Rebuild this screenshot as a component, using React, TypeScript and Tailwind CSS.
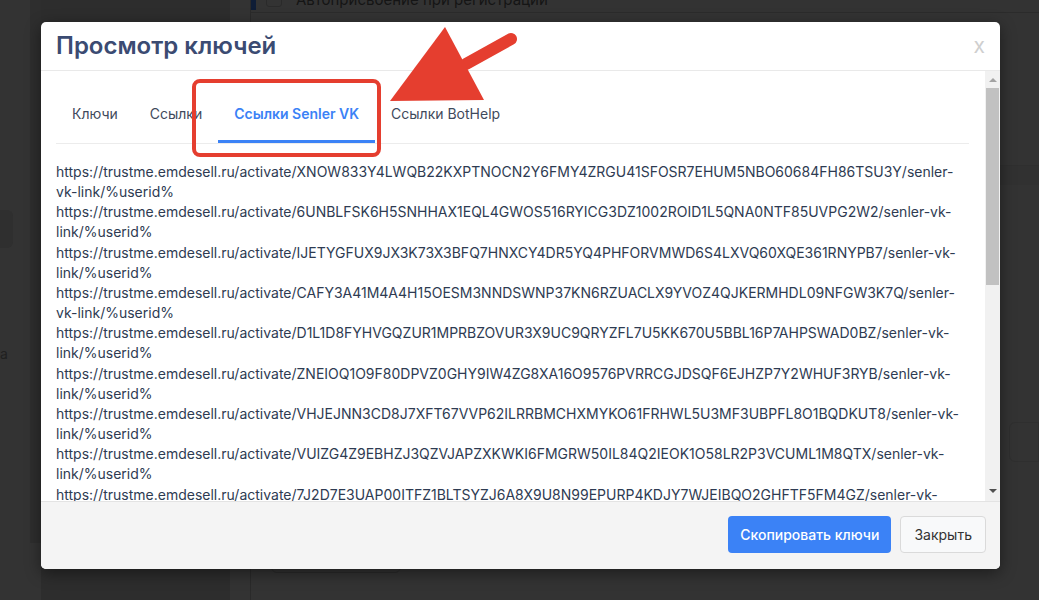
import React from "react";

type Link = { id: string; head: string; tail: string };

const BASE = "https://trustme.emdesell.ru/activate/";

// rows are split the same way the browser wrapped them in the modal
const links: Link[] = [
  { id: "XNOW833Y4LWQB22KXPTNOCN2Y6FMY4ZRGU41SFOSR7EHUM5NBO60684FH86TSU3Y", head: "senler-", tail: "vk-link/%userid%" },
  { id: "6UNBLFSK6H5SNHHAX1EQL4GWOS516RYICG3DZ1002ROID1L5QNA0NTF85UVPG2W2", head: "senler-vk-", tail: "link/%userid%" },
  { id: "IJETYGFUX9JX3K73X3BFQ7HNXCY4DR5YQ4PHFORVMWD6S4LXVQ60XQE361RNYPB7", head: "senler-vk-", tail: "link/%userid%" },
  { id: "CAFY3A41M4A4H15OESM3NNDSWNP37KN6RZUACLX9YVOZ4QJKERMHDL09NFGW3K7Q", head: "senler-", tail: "vk-link/%userid%" },
  { id: "D1L1D8FYHVGQZUR1MPRBZOVUR3X9UC9QRYZFL7U5KK670U5BBL16P7AHPSWAD0BZ", head: "senler-vk-", tail: "link/%userid%" },
  { id: "ZNEIOQ1O9F80DPVZ0GHY9IW4ZG8XA16O9576PVRRCGJDSQF6EJHZP7Y2WHUF3RYB", head: "senler-vk-", tail: "link/%userid%" },
  { id: "VHJEJNN3CD8J7XFT67VVP62ILRRBMCHXMYKO61FRHWL5U3MF3UBPFL8O1BQDKUT8", head: "senler-vk-", tail: "link/%userid%" },
  { id: "VUIZG4Z9EBHZJ3QZVJAPZXKWKI6FMGRW50IL84Q2IEOK1O58LR2P3VCUML1M8QTX", head: "senler-vk-", tail: "link/%userid%" },
  { id: "7J2D7E3UAP00ITFZ1BLTSYZJ6A8X9U8N99EPURP4KDJY7WJEIBQO2GHFTF5FM4GZ", head: "senler-vk-", tail: "link/%userid%" },
];

const tabs = ["Ключи", "Ссылки", "Ссылки Senler VK", "Ссылки BotHelp"];

function BackgroundPage() {
  return (
    <div className="flex h-full w-full bg-[#333333] text-[#1c1c1c]">
      <div className="relative w-[30px] shrink-0">
        <div className="mt-[210px] h-[38px] w-[13px] rounded-r-md bg-[#2f2f2f]" />
        <div className="mt-[98px] text-[14px] leading-4 text-[#202020]">a</div>
      </div>
      <div className="h-[543px] w-[11px] shrink-0 bg-[#2e2e2e]" />
      <div className="w-[189px] shrink-0 bg-[#2d2d2d]" />
      <div className="w-[20px] shrink-0 bg-[#333333]" />
      <div className="flex flex-1 flex-col border-l border-[#2a2a2a]">
        <div className="flex h-[21px] items-start border-b border-[#2b2b2b] -mt-[8px]">
          <div className="h-[18px] w-[5px] bg-[#0f1d36]" />
          <div className="ml-[10px] h-[15px] w-[16px] rounded-[3px] border border-[#2a2a2a]" />
          <div className="ml-[14px] text-[15px] leading-4 text-[#151515]">
            Автоприсвоение при регистрации
          </div>
        </div>
        <div className="mt-[152px] h-[20px] border-t border-[#2f2f2f] bg-[#313131]" />
        <div className="ml-auto mt-[237px] h-[40px] w-[30px] rounded-l-md border border-[#2f2f2f]" />
        <div className="ml-[20px] mt-[81px] h-[30px] w-[130px] rounded-md border border-[#2a2a2a]" />
      </div>
    </div>
  );
}

function Scrollbar() {
  return (
    <div className="flex w-[15px] shrink-0 flex-col items-center bg-[#f1f1f1]">
      <div className="mt-[7px] h-0 w-0 border-x-[4px] border-b-[4px] border-x-transparent border-b-[#a3a3a3]" />
      <div className="mt-[6px] h-[197px] w-[13px] bg-[#c1c1c1]" />
      <div className="mt-auto mb-[8px] h-0 w-0 border-x-[4px] border-t-[4px] border-x-transparent border-t-[#505050]" />
    </div>
  );
}

function Annotation() {
  return (
    <svg
      className="pointer-events-none absolute left-0 top-0"
      width="1039"
      height="600"
      viewBox="0 0 1039 600"
    >
      <rect
        x="194"
        y="81"
        width="185"
        height="74"
        rx="6"
        fill="none"
        stroke="#e53e2f"
        strokeWidth="4"
      />
      <line
        x1="466"
        y1="64"
        x2="511"
        y2="39"
        stroke="#e53e2f"
        strokeWidth="12"
        strokeLinecap="round"
      />
      <polygon points="390,101 445,27 484,100" fill="#e53e2f" />
    </svg>
  );
}

export default function App() {
  return (
    <div
      className="relative h-[600px] w-[1039px] overflow-hidden"
      style={{ fontFamily: "Inter, 'Noto Sans', sans-serif" }}
    >
      <BackgroundPage />

      <div className="absolute left-[41px] top-[22px] flex h-[547px] w-[959px] flex-col overflow-hidden rounded-[5px] bg-white shadow-[0_4px_16px_rgba(0,0,0,0.45)]">
        <div className="flex h-[49px] shrink-0 items-center justify-between border-b border-[#e9e9e9] pl-[15px] pr-[15px]">
          <h2 className="text-[24px] font-semibold leading-8 text-[#3b4b72]">
            Просмотр ключей
          </h2>
          <span className="text-[21px] leading-6 text-[#cfcfcf]">x</span>
        </div>

        <div className="flex min-h-0 flex-1">
          <div className="min-w-0 flex-1 overflow-hidden pl-[15px] pr-[16px] pt-[16px]">
            <div className="flex border-b border-[#ececec]">
              {tabs.map((t, i) => (
                <div
                  key={t}
                  className={
                    i === 2
                      ? "border-b-[3px] border-[#3b82f6] px-[16px] pt-[17px] pb-[16px] text-[14px] font-semibold leading-5 text-[#3b82f6]"
                      : "border-b-[3px] border-transparent px-[16px] pt-[17px] pb-[16px] text-[14px] leading-5 text-[#3f4a5c]"
                  }
                >
                  {t}
                </div>
              ))}
            </div>

            <div className="mt-[18px] text-[14px] leading-[20.15px] text-[#2e3b52]">
              {links.map((l) => (
                <div key={l.id}>
                  <div className="whitespace-nowrap">
                    {BASE}
                    {l.id}/{l.head}
                  </div>
                  <div className="whitespace-nowrap">{l.tail}</div>
                </div>
              ))}
            </div>
          </div>
          <Scrollbar />
        </div>

        <div className="flex h-[68px] shrink-0 items-start justify-end gap-[9px] border-t border-[#e3e3e3] bg-[#f4f4f4] pr-[14px] pt-[14px]">
          <button className="h-[37px] rounded-[4px] bg-[#3b82f6] px-[12px] text-[14px] font-medium text-white">
            Скопировать ключи
          </button>
          <button className="h-[37px] rounded-[4px] border border-[#dadada] bg-[#f8f9fa] px-[13px] text-[14px] text-[#333333]">
            Закрыть
          </button>
        </div>
      </div>

      <Annotation />
    </div>
  );
}
